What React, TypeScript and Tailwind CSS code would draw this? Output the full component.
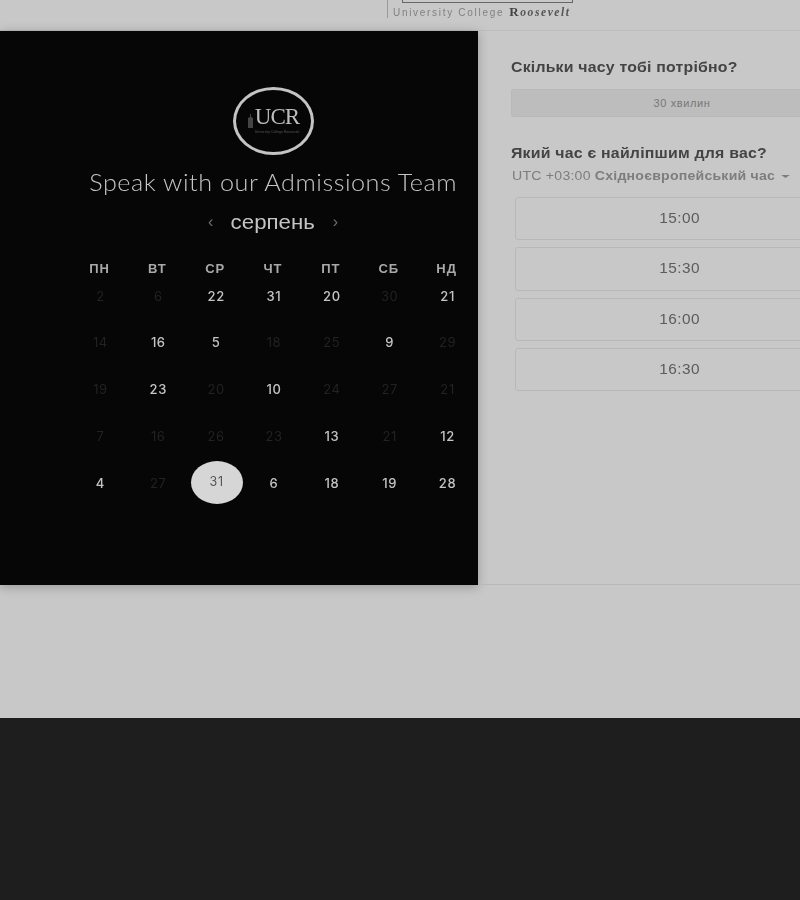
const rows = [
  [['2', 0], ['6', 0], ['22', 1], ['31', 1], ['20', 1], ['30', 0], ['21', 1]],
  [['14', 0], ['16', 1], ['5', 1], ['18', 0], ['25', 0], ['9', 1], ['29', 0]],
  [['19', 0], ['23', 1], ['20', 0], ['10', 1], ['24', 0], ['27', 0], ['21', 0]],
  [['7', 0], ['16', 0], ['26', 0], ['23', 0], ['13', 1], ['21', 0], ['12', 1]],
  [['4', 1], ['27', 0], ['31', 2], ['6', 1], ['18', 1], ['19', 1], ['28', 1]],
] as const

const days = ['ПН', 'ВТ', 'СР', 'ЧТ', 'ПТ', 'СБ', 'НД']
const times = ['15:00', '15:30', '16:00', '16:30']

function DayCell({ label, state }: { label: string; state: number }) {
  if (state === 2) {
    return (
      <div className="flex h-[46.75px] items-center justify-center">
        <span className="-mt-[1px] ml-[1px] flex h-[43px] w-[52px] items-center justify-center rounded-[50%] bg-[#d6d6d6] pb-[2px] font-['Inter',sans-serif] text-[12.5px] tracking-[0.8px] text-[#555]">
          {label}
        </span>
      </div>
    )
  }
  return (
    <div
      className={
        state === 1
          ? "flex h-[46.75px] items-center justify-center font-['Inter',sans-serif] text-[13px] font-medium tracking-[0.6px] text-[#c4c4c4]"
          : "flex h-[46.75px] items-center justify-center font-['Inter',sans-serif] text-[13px] tracking-[0.6px] text-[#222222]"
      }
    >
      {label}
    </div>
  )
}

function Calendar() {
  return (
    <div className="h-[554px] w-[478px] shrink-0 bg-[#060607] pt-[56px] pl-[70px] shadow-[0_2px_10px_rgba(0,0,0,0.25)]">
      <div className="flex w-[406px] flex-col items-center blur-[0.5px]">
        {/* UCR logo */}
        <div className="flex h-[68px] w-[81px] items-center justify-center rounded-[50%] border-[3px] border-[#c4c4c4]">
          <div className="mb-[2px] flex items-end gap-[1px]">
            <svg width="7" height="14" viewBox="0 0 7 14" className="mb-[7px]">
              <path d="M3 0h1v3l2 1v10H1V4l2-1z" fill="#444" />
            </svg>
            <div className="flex flex-col items-center">
              <span className="font-['Liberation_Serif',serif] text-[23px] leading-[22px] tracking-[-0.9px] text-[#bdbdbd]">
                UCR
              </span>
              <span className="mt-[2px] text-[3.5px] leading-[5px] whitespace-nowrap text-[#555]">University College Roosevelt</span>
            </div>
          </div>
        </div>
        <h1 className="mt-[13px] scale-x-[1.05] font-['Lato',sans-serif] text-[24px] leading-[28px] font-light tracking-[0.5px] whitespace-nowrap text-[#c6c6c6]">
          Speak with our Admissions Team
        </h1>
        <div className="mt-[11px] flex h-[30px] items-center gap-[20px]">
          <span className="text-[16px] text-[#6f6f6f]">‹</span>
          <span className="scale-x-[1.06] text-[21px] text-[#c4c4c4]">серпень</span>
          <span className="text-[16px] text-[#6f6f6f]">›</span>
        </div>
        <div className="mt-[20px] grid w-[405px] grid-cols-7">
          {days.map((d) => (
            <div key={d} className="flex h-[23px] items-center justify-center text-[13px] font-bold tracking-[0.9px] text-[#a8a8a8]">
              {d}
            </div>
          ))}
        </div>
        <div className="-mt-[7px] ml-[2px] grid w-[405px] grid-cols-7">
          {rows.flat().map(([label, state], i) => (
            <DayCell key={i} label={label} state={state} />
          ))}
        </div>
      </div>
    </div>
  )
}

function TimePanel() {
  return (
    <div className="h-[554px] w-[400px] shrink-0 border-b border-[#b9b9b9] pt-[26px] pl-[33px]">
      <div className="blur-[0.5px]">
        <h2 className="origin-left scale-x-[1.056] text-[15px] leading-[20px] font-bold tracking-[0.2px] whitespace-nowrap text-[#444]">
          Скільки часу тобі потрібно?
        </h2>
        <div className="mt-[12px] flex h-[28px] w-[342px] items-center justify-center rounded-[2px] border border-[#b9b9b9] bg-[#bdbdbd] text-[11px] tracking-[0.6px] text-[#777]">
          30 хвилин
        </div>
        <h2 className="mt-[26px] origin-left scale-x-[1.058] text-[15px] leading-[20px] font-bold tracking-[0.2px] whitespace-nowrap text-[#444]">
          Який час є найліпшим для вас?
        </h2>
        <div className="mt-[4px] flex origin-left scale-x-[1.085] items-center gap-[6px] pl-[1px] text-[13px] leading-[18px] tracking-[0.2px] whitespace-nowrap text-[#7d7d7d]">
          <span>
            UTC +03:00 <span className="font-bold">Східноєвропейський час</span>
          </span>
          <span className="mt-[1px] h-0 w-0 border-x-[4px] border-t-[3px] border-x-transparent border-t-[#7d7d7d]" />
        </div>
        <div className="mt-[12px] ml-[4px] flex flex-col gap-[7px]">
          {times.map((t) => (
            <div
              key={t}
              className="flex h-[43.3px] w-[330px] items-center justify-center rounded-[3px] border border-[#b8b8b8] text-[14px] text-[#5c5c5c]"
            >
              <span className="scale-x-[1.1] tracking-[0.4px]">{t}</span>
            </div>
          ))}
        </div>
      </div>
    </div>
  )
}

export default function App() {
  return (
    <div className="flex h-[900px] w-[800px] flex-col overflow-hidden bg-[#c8c8c8] font-['Liberation_Sans',Arial,sans-serif]">
      <header className="flex h-[31px] shrink-0 border-b border-[#bdbdbd] pl-[387px]">
        <div className="h-[18px] border-l border-[#9a9a9a] pl-[5px] blur-[0.5px]">
          <div className="ml-[9px] h-[3px] w-[171px] rounded-b-[1px] border-x border-b border-[#666]" />
          <div className="mt-[3px] flex items-baseline gap-[5px] whitespace-nowrap">
            <span className="text-[10px] leading-[12px] tracking-[1.7px] text-[#808080]">University College</span>
            <span className="font-['Liberation_Serif',serif] text-[11.5px] leading-[12px] font-bold tracking-[1.6px] text-[#555] italic">
              <span className="text-[13px] text-[#444] not-italic">R</span>oosevelt
            </span>
          </div>
        </div>
      </header>
      <main className="flex h-[687px] shrink-0 items-start">
        <Calendar />
        <TimePanel />
      </main>
      <footer className="flex-1 bg-[#1e1e1e]" />
    </div>
  )
}
